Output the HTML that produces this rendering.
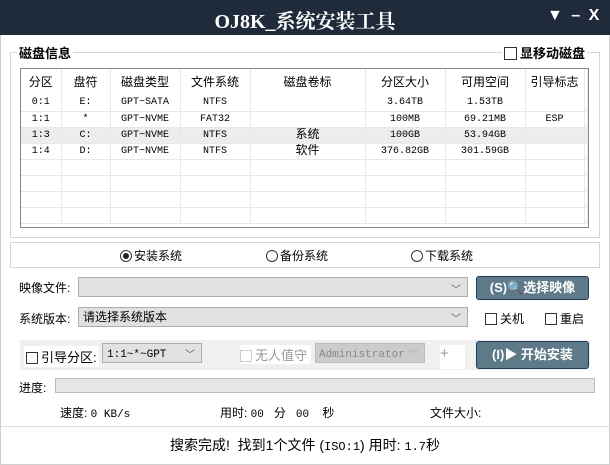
<!DOCTYPE html>
<html><head><meta charset="utf-8"><style>
*{margin:0;padding:0;box-sizing:border-box}
body{width:610px;height:465px;background:#fff;position:relative;overflow:hidden;font-family:"Liberation Sans","Noto Sans CJK SC",sans-serif;font-size:12px;color:#000}
.a{position:absolute}
.mono{font-family:"Liberation Mono","Noto Sans CJK SC",monospace;font-size:11px}
table{border-collapse:collapse;position:absolute;left:21px;top:69px;width:567px;table-layout:fixed}
td{height:16px;border-right:1px solid #e8e8e8;border-bottom:1px solid #e8e8e8;text-align:center;font-family:"Liberation Mono","Noto Sans CJK SC",monospace;font-size:10px;line-height:15px;white-space:nowrap;overflow:hidden}
tr.h td{height:26px;font-family:"Liberation Sans","Noto Sans CJK SC",sans-serif;font-size:12px;border-bottom:none}
tr.g td{background:#ededed}
.cb{display:inline-block;width:12px;height:12px;border:1px solid #333;vertical-align:-2px;margin-right:3px;background:#fff}
.rd{display:inline-block;width:12px;height:12px;border:1px solid #333;border-radius:50%;vertical-align:-2px;margin-right:2px;position:relative}
.combo{border:1px solid #adadad;background:#e1e1e1;height:20px}
.arr{position:absolute;right:6px;top:3px;font-size:10px;color:#555}
.btn{background:#5e7a89;border:1px solid #1c3a5e;border-radius:3px;color:#fff;font-weight:bold;font-size:13px;text-align:center}
</style></head><body>
<div class="a" style="left:0;top:0;width:610px;height:35px;background:#1f2a3a"></div>
<div class="a" style="left:0;top:5px;width:610px;text-align:center;color:#fff;font-size:20px;font-weight:bold;font-family:'Liberation Serif','Noto Serif CJK SC',serif">OJ8K_系统安装工具</div>
<div class="a" style="left:547px;top:7px;color:#fff;font-size:16px;font-weight:bold;letter-spacing:2px">▼ – X</div>
<div class="a" style="left:0;top:35px;width:610px;height:430px;border:1px solid #d0d0d0;border-top:none"></div>
<div class="a" style="left:10px;top:52px;width:590px;height:186px;border:1px solid #d6d6d6"></div>
<div class="a" style="left:17px;top:43px;background:#fff;padding:0 2px;font-weight:bold;font-size:13px">磁盘信息</div>
<div class="a" style="left:502px;top:43px;background:#fff;padding:0 2px;font-weight:bold;font-size:13px"><span class="cb" style="width:13px;height:13px"></span>显移动磁盘</div>
<div class="a" style="left:20px;top:68px;width:569px;height:160px;border:1px solid #888"></div>
<table>
<colgroup><col style="width:40px"><col style="width:49px"><col style="width:70px"><col style="width:70px"><col style="width:115px"><col style="width:80px"><col style="width:80px"><col style="width:59px"><col></colgroup>
<tr class="h"><td>分区</td><td>盘符</td><td>磁盘类型</td><td>文件系统</td><td>磁盘卷标</td><td>分区大小</td><td>可用空间</td><td>引导标志</td><td></td></tr>
<tr><td>0:1</td><td>E:</td><td>GPT~SATA</td><td>NTFS</td><td></td><td>3.64TB</td><td>1.53TB</td><td></td><td></td></tr>
<tr><td>1:1</td><td>*</td><td>GPT~NVME</td><td>FAT32</td><td></td><td>100MB</td><td>69.21MB</td><td>ESP</td><td></td></tr>
<tr class="g"><td>1:3</td><td>C:</td><td>GPT~NVME</td><td>NTFS</td><td style="font-size:12px">系统</td><td>100GB</td><td>53.94GB</td><td></td><td></td></tr>
<tr><td>1:4</td><td>D:</td><td>GPT~NVME</td><td>NTFS</td><td style="font-size:12px">软件</td><td>376.82GB</td><td>301.59GB</td><td></td><td></td></tr>
<tr><td></td><td></td><td></td><td></td><td></td><td></td><td></td><td></td><td></td></tr>
<tr><td></td><td></td><td></td><td></td><td></td><td></td><td></td><td></td><td></td></tr>
<tr><td></td><td></td><td></td><td></td><td></td><td></td><td></td><td></td><td></td></tr>
<tr><td></td><td></td><td></td><td></td><td></td><td></td><td></td><td></td><td></td></tr>
</table>
<div class="a" style="left:10px;top:242px;width:590px;height:26px;border:1px solid #d6d6d6"></div>
<div class="a" style="left:120px;top:247px"><span class="rd"><span style="position:absolute;left:2px;top:2px;width:6px;height:6px;border-radius:50%;background:#222"></span></span>安装系统</div>
<div class="a" style="left:266px;top:247px"><span class="rd"></span>备份系统</div>
<div class="a" style="left:411px;top:247px"><span class="rd"></span>下载系统</div>
<div class="a" style="left:19px;top:279px">映像文件:</div>
<div class="a combo" style="left:78px;top:277px;width:390px"><span class="arr">﹀</span></div>
<div class="a btn" style="left:476px;top:276px;width:113px;height:24px;line-height:22px">(S)🔍选择映像</div>
<div class="a" style="left:19px;top:310px">系统版本:</div>
<div class="a combo" style="left:78px;top:307px;width:390px;padding-left:4px;line-height:18px">请选择系统版本<span class="arr">﹀</span></div>
<div class="a" style="left:485px;top:310px"><span class="cb"></span>关机</div>
<div class="a" style="left:545px;top:310px"><span class="cb"></span>重启</div>
<div class="a" style="left:20px;top:340px;width:570px;height:30px;background:#f0f0f0"></div>
<div class="a" style="left:24px;top:346px;background:#fff;padding:1px 2px;font-size:13px"><span class="cb"></span>引导分区:</div>
<div class="a" style="left:102px;top:343px;width:100px;height:20px;border:1px solid #adadad;background:#e1e1e1;padding-left:4px;line-height:18px" ><span class="mono">1:1~*~GPT</span><span class="arr">﹀</span></div>
<div class="a" style="left:240px;top:345px;background:#fff;padding:0 4px 0 0;color:#999;font-size:13px"><span class="cb" style="border-color:#ccc"></span>无人值守</div>
<div class="a" style="left:315px;top:343px;width:110px;height:20px;background:#ccc;border:1px solid #bbb;color:#888;padding-left:3px;line-height:18px"><span class="mono">Administrator</span><span class="arr" style="color:#aaa">﹀</span></div>
<div class="a" style="left:440px;top:345px;width:25px;height:24px;background:#fff;color:#999;font-size:15px;padding-left:0">+</div>
<div class="a btn" style="left:476px;top:341px;width:113px;height:28px;line-height:26px">(I)▶ 开始安装</div>
<div class="a" style="left:19px;top:379px">进度:</div>
<div class="a" style="left:55px;top:378px;width:540px;height:15px;border:1px solid #bcbcbc;background:#e6e6e6"></div>
<div class="a" style="left:60px;top:404px">速度: <span class="mono">0 KB/s</span></div>
<div class="a" style="left:220px;top:404px">用时: <span class="mono">00</span>&nbsp;&nbsp;&nbsp;分&nbsp;&nbsp;&nbsp;<span class="mono">00</span>&nbsp;&nbsp;&nbsp;&nbsp;秒</div>
<div class="a" style="left:430px;top:404px">文件大小:</div>
<div class="a" style="left:1px;top:426px;width:608px;height:1px;background:#ddd"></div>
<div class="a" style="left:0;top:435px;width:610px;text-align:center;font-size:14px">搜索完成!&nbsp; 找到1个文件 (<span class="mono" style="font-size:12px">ISO:1</span>) 用时: <span class="mono" style="font-size:12px">1.7</span>秒</div>
</body></html>
